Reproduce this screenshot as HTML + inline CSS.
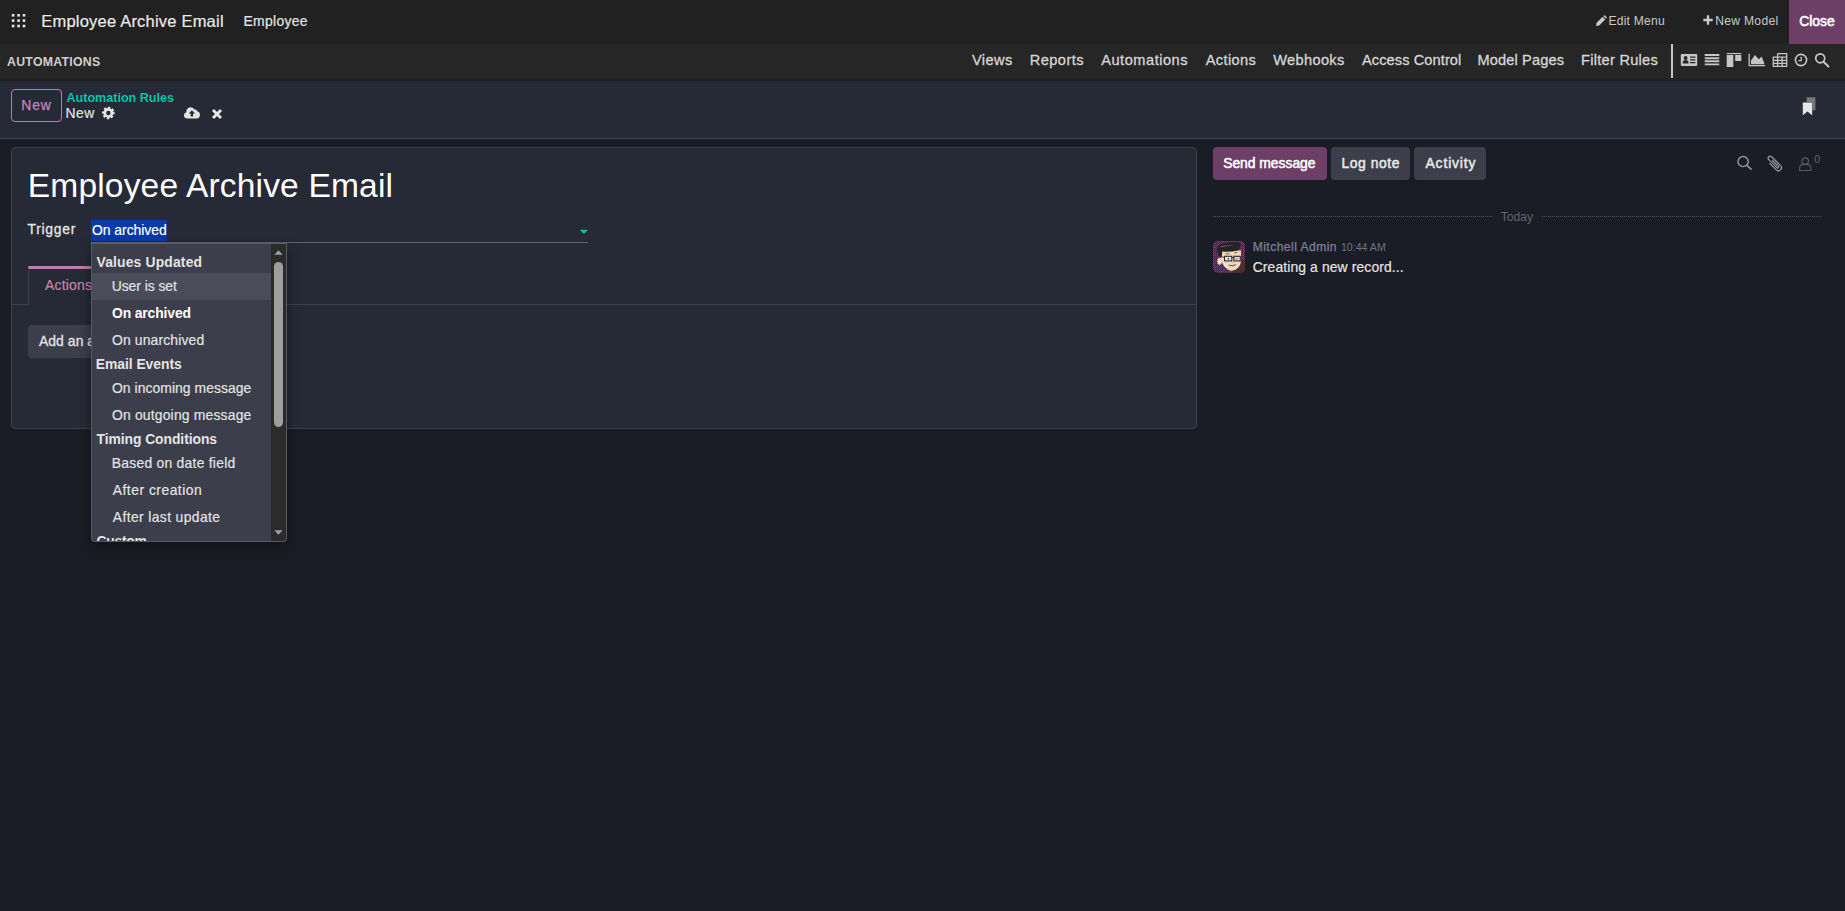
<!DOCTYPE html>
<html lang="en">
<head>
<meta charset="utf-8">
<title>Odoo Studio - Automations</title>
<style>
html,body{margin:0;padding:0;width:1845px;height:911px;overflow:hidden;background:#1b1d26;
  font-family:"Liberation Sans",sans-serif;}
#root{position:relative;width:1845px;height:911px;overflow:hidden;background:#1b1d26;}
.a{position:absolute;box-sizing:border-box;}
.t{position:absolute;white-space:pre;line-height:1;font-family:"Liberation Sans",sans-serif;}
svg{position:absolute;overflow:visible;}
</style>
</head>
<body>
<div id="root">

<!-- ===== top navbar ===== -->
<div class="a" style="left:0;top:0;width:1845px;height:44px;background:#212121;"></div>
<div class="a" style="left:1789px;top:0;width:56px;height:44px;background:#6d3f67;"></div>
<!-- apps grid icon -->
<svg style="left:11px;top:13px" width="16" height="16" viewBox="0 0 16 16" fill="#e6e6e6">
  <rect x="0.8" y="1" width="2.6" height="2.6"/><rect x="6.3" y="1" width="2.6" height="2.6"/><rect x="11.7" y="1" width="2.6" height="2.6"/>
  <rect x="0.8" y="6.3" width="2.6" height="2.6"/><rect x="6.3" y="6.3" width="2.6" height="2.6"/><rect x="11.7" y="6.3" width="2.6" height="2.6"/>
  <rect x="0.8" y="11.7" width="2.6" height="2.6"/><rect x="6.3" y="11.7" width="2.6" height="2.6"/><rect x="11.7" y="11.7" width="2.6" height="2.6"/>
</svg>
<!-- pencil -->
<svg style="left:1595px;top:15px" width="12" height="12" viewBox="0 0 12 12">
  <path d="M1 11 L1.6 7.8 L7.6 1.8 L10.2 4.4 L4.2 10.4 Z" fill="#c9c9c9"/>
  <path d="M8.3 1.1 L9.1 0.4 Q9.6 0 10.1 0.5 L11.5 1.9 Q12 2.4 11.5 2.9 L10.9 3.7 Z" fill="#c9c9c9"/>
</svg>
<!-- plus -->
<svg style="left:1703px;top:15px" width="10" height="10" viewBox="0 0 10 10">
  <path d="M5 0.3 V9.7 M0.3 5 H9.7" stroke="#c9c9c9" stroke-width="2.4" fill="none"/>
</svg>

<!-- ===== studio menu bar ===== -->
<div class="a" style="left:0;top:44px;width:1845px;height:35px;background:#262626;"></div>
<div class="a" style="left:0;top:78px;width:1845px;height:3px;background:#212121;"></div>
<div class="a" style="left:1671px;top:44px;width:2px;height:34px;background:#c6c6c6;"></div>

<!-- view icons -->
<!-- address card -->
<svg style="left:1680px;top:53px" width="18" height="14" viewBox="0 0 18 14">
  <rect x="0.8" y="1" width="16.4" height="12" rx="1.2" fill="#c6c6c6"/>
  <circle cx="5.6" cy="5" r="1.9" fill="#262626"/>
  <path d="M2.6 10.4 Q2.6 7 5.6 7 Q8.6 7 8.6 10.4 Z" fill="#262626"/>
  <path d="M10 4.2 H15.4 M10 6.9 H15.4 M10 9.6 H15.4" stroke="#262626" stroke-width="1.2"/>
</svg>
<!-- list -->
<svg style="left:1704px;top:53px" width="16" height="14" viewBox="0 0 16 14">
  <path d="M0.7 2 H15.3 M0.7 5.2 H15.3 M0.7 8.3 H15.3 M0.7 11.4 H15.3" stroke="#c6c6c6" stroke-width="1.9"/>
</svg>
<!-- kanban -->
<svg style="left:1726px;top:52px" width="16" height="16" viewBox="0 0 16 16" fill="#c6c6c6">
  <rect x="0.7" y="1" width="14.6" height="1.1"/>
  <rect x="0.7" y="3" width="6.6" height="12"/>
  <rect x="9.2" y="3" width="6.1" height="6"/>
</svg>
<!-- area chart -->
<svg style="left:1748px;top:52px" width="18" height="16" viewBox="0 0 18 16">
  <path d="M1.2 1.8 V13.6 H17.2" stroke="#c6c6c6" stroke-width="1.3" fill="none"/>
  <path d="M3 12.2 V8.4 L7 3 L10.8 7.2 L13.6 4.6 L16.2 11 V12.2 Z" fill="#c6c6c6"/>
</svg>
<!-- pivot / table -->
<svg style="left:1772px;top:52px" width="16" height="16" viewBox="0 0 16 16">
  <path d="M5.6 1.6 H14.7 V14.4 H1.3 V5.2 H14.7 M5.6 1.6 V14.4 M10.1 5.2 V14.4 M1.3 8.3 H14.7 M1.3 11.4 H14.7" stroke="#c6c6c6" stroke-width="1.3" fill="none"/>
</svg>
<!-- clock -->
<svg style="left:1794px;top:53px" width="14" height="14" viewBox="0 0 14 14">
  <circle cx="7" cy="7" r="5.6" stroke="#c6c6c6" stroke-width="1.6" fill="none"/>
  <path d="M7.2 3.8 V7.6 H4.4" stroke="#c6c6c6" stroke-width="1.3" fill="none"/>
</svg>
<!-- search -->
<svg style="left:1814px;top:52px" width="16" height="16" viewBox="0 0 16 16">
  <circle cx="6.2" cy="6.3" r="4.5" stroke="#c6c6c6" stroke-width="1.7" fill="none"/>
  <path d="M9.6 9.7 L14.4 14.5" stroke="#c6c6c6" stroke-width="2" stroke-linecap="round"/>
</svg>

<!-- ===== control panel ===== -->
<div class="a" style="left:0;top:81px;width:1845px;height:58px;background:#262a36;border-bottom:1px solid #3f4250;"></div>
<div class="a" style="left:11px;top:89px;width:51px;height:33px;border:1px solid #c27ab2;border-radius:4px;"></div>
<!-- cog -->
<svg style="left:102px;top:107px" width="13" height="13" viewBox="0 0 13 13">
  <g transform="translate(6.35 6.0)">
    <circle r="5.3" fill="none" stroke="#e6e6e6" stroke-width="2" stroke-dasharray="2.35 1.813" transform="rotate(-12)"/>
    <circle r="3.55" fill="none" stroke="#e6e6e6" stroke-width="2.7"/>
  </g>
</svg>
<!-- cloud upload -->
<svg style="left:182.6px;top:105.7px" width="18" height="14" viewBox="0 0 18 14">
  <path d="M4.6 12.4 Q1 12.4 1 9.2 Q1 6.8 3.4 6.2 Q3.2 2.8 6.2 1.6 Q9.4 0.6 11.4 3.6 Q13.6 2.9 14.4 5.6 Q16.9 6 16.9 9 Q16.9 12.4 13.6 12.4 Z" fill="#e4e4e4"/>
  <path d="M8.9 4.2 L12.1 7.6 H10.1 V10.6 H7.7 V7.6 H5.7 Z" fill="#262a36"/>
</svg>
<!-- times -->
<svg style="left:211px;top:107.5px" width="12" height="12" viewBox="0 0 12 12">
  <path d="M2 2 L10 10 M10 2 L2 10" stroke="#e8e8e8" stroke-width="2.9"/>
</svg>
<!-- bookmarks -->
<svg style="left:1801px;top:96px" width="16" height="20" viewBox="0 0 16 20">
  <path d="M5.6 1.2 H14.4 V14.2 H11.4 V6 H5.6 Z" fill="#8f929b" opacity="0.75"/>
  <path d="M1.8 6.4 H11.2 V19.2 L6.5 15.6 L1.8 19.2 Z" fill="#e6e6e6"/>
</svg>

<!-- ===== form sheet ===== -->
<div class="a" style="left:11px;top:147px;width:1186px;height:282px;background:#262a36;border:1px solid #3c3f4c;border-radius:4px;"></div>
<!-- trigger input: selection + underline + caret -->
<div class="a" style="left:91px;top:220px;width:76px;height:21px;background:#0b3aa8;"></div>
<div class="a" style="left:91px;top:242px;width:497px;height:1px;background:#5f6270;"></div>
<svg style="left:579px;top:229px" width="10" height="6" viewBox="0 0 10 6"><path d="M0.8 0.8 H9 L4.9 5 Z" fill="#0fc0a6"/></svg>
<!-- notebook -->
<div class="a" style="left:11px;top:304px;width:1186px;height:1px;background:#3c3f4c;"></div>
<div class="a" style="left:28px;top:266px;width:80px;height:39px;background:#262a36;border-left:1px solid #3c3f4c;border-right:1px solid #3c3f4c;border-top:3px solid #c27dae;"></div>
<div class="a" style="left:28px;top:325px;width:112px;height:33px;background:#3c3e4b;border-radius:4px;"></div>

<!-- ===== chatter ===== -->
<div class="a" style="left:1213px;top:147px;width:114px;height:33px;background:#6d3f67;border-radius:4px;"></div>
<div class="a" style="left:1331px;top:147px;width:79px;height:33px;background:#3c3e4b;border-radius:4px;"></div>
<div class="a" style="left:1414px;top:147px;width:72px;height:33px;background:#3c3e4b;border-radius:4px;"></div>
<div class="a" style="left:1213px;top:216px;width:279px;height:1px;background:repeating-linear-gradient(90deg,#4f5262 0,#4f5262 1px,transparent 1px,transparent 2px);"></div>
<div class="a" style="left:1542px;top:216px;width:279px;height:1px;background:repeating-linear-gradient(90deg,#4f5262 0,#4f5262 1px,transparent 1px,transparent 2px);"></div>
<!-- chatter icons -->
<svg style="left:1736px;top:155px" width="17" height="17" viewBox="0 0 17 17">
  <circle cx="7.1" cy="6.5" r="5.1" stroke="#9197a6" stroke-width="1.45" fill="none"/>
  <path d="M10.9 10.4 L15 14.2" stroke="#9197a6" stroke-width="1.6" stroke-linecap="round"/>
</svg>
<svg style="left:1766px;top:154.6px" width="18" height="18" viewBox="0 0 18 18">
  <g transform="rotate(-45 9 9.4)" fill="none" stroke="#9197a6" stroke-width="1.25" stroke-linecap="round">
    <path d="M6 4.9 V14.2 A3 3 0 0 0 12 14.2 V1.6 A2 2 0 0 0 8 1.6 V13 A1 1 0 0 0 10 13 V4.9"/>
  </g>
</svg>
<svg style="left:1798px;top:156px" width="15" height="16" viewBox="0 0 15 16">
  <circle cx="7.2" cy="5.1" r="3.3" stroke="#555a6c" stroke-width="1.2" fill="none"/>
  <path d="M1.6 14.5 V12.6 Q1.6 8.9 4.7 8.1 Q7.2 9.3 9.7 8.1 Q12.8 8.9 12.8 12.6 V14.5 Z" stroke="#555a6c" stroke-width="1.2" fill="none" stroke-linejoin="round"/>
</svg>
<!-- avatar -->
<svg style="left:1213px;top:241px" width="32" height="32" viewBox="0 0 32 32">
  <defs>
    <clipPath id="av"><rect x="0" y="0" width="32" height="32" rx="5"/></clipPath>
    <pattern id="dz" width="2" height="2" patternUnits="userSpaceOnUse">
      <rect width="2" height="2" fill="#402c44"/><rect width="1" height="1" fill="#82407e"/><rect x="1" y="1" width="1" height="1" fill="#5a3358"/>
    </pattern>
    <pattern id="dz2" width="2" height="2" patternUnits="userSpaceOnUse">
      <rect width="2" height="2" fill="#4a2c2c"/><rect width="1" height="1" fill="#523034"/>
    </pattern>
  </defs>
  <g clip-path="url(#av)">
    <rect width="32" height="32" fill="url(#dz)"/>
    <path d="M19 32 L24.5 22 L32 18 V32 Z" fill="url(#dz2)"/>
    <!-- ear -->
    <ellipse cx="6.6" cy="20.2" rx="2.4" ry="3.5" fill="#ecd3b4"/>
    <ellipse cx="6.9" cy="20.6" rx="1.1" ry="2" fill="#f4ece4"/>
    <!-- face -->
    <path d="M8 9.6 H28 V20 Q27.8 25 23.4 28.2 Q19.4 30.8 15.2 28.8 Q9.8 25.8 8 18 Z" fill="#f1d9b8"/>
    <path d="M11 21 Q12.6 25.6 16 27.4 Q12.8 27.2 10.2 22.6 Z" fill="#f7efe8" opacity="0.8"/>
    <!-- hair -->
    <path d="M4 9 Q4.6 3.4 11 2.2 Q19 0.4 27.4 1.6 Q28.4 6.4 24.6 9.4 Q17 11.2 9.2 10.4 L8.8 16.6 Q6 15.8 4.8 12.8 Z" fill="#242427"/>
    <path d="M7.4 5.6 Q13 3.6 20.6 4.6 Q14 5 7.8 6.6 Z" fill="#5d5a66"/>
    <!-- glasses -->
    <rect x="11.6" y="15.3" width="7.2" height="4.6" fill="#f4f0ea" stroke="#262834" stroke-width="1.1"/>
    <rect x="20.9" y="15.3" width="6.4" height="4.6" fill="#e6d6c2" stroke="#262834" stroke-width="1.1"/>
    <path d="M18.8 16.6 H20.9 M8.6 15.8 L11.6 16.4" stroke="#262834" stroke-width="0.9"/>
    <circle cx="15.4" cy="17.7" r="0.9" fill="#2c3450"/>
    <circle cx="23.8" cy="17.7" r="0.8" fill="#8b7764"/>
    <!-- brows -->
    <path d="M12.8 12.8 H16.4 M21.6 11.6 H24" stroke="#3a3436" stroke-width="0.8"/>
    <!-- nose & mouth -->
    <path d="M19.6 21.6 H21.6" stroke="#d9b795" stroke-width="0.7"/>
    <path d="M15.8 24 Q19.4 25.4 22.8 23.6 Q19.4 26.4 15.8 24 Z" fill="#6c4a4a" stroke="#5a4148" stroke-width="0.5"/>
  </g>
</svg>

<span class="t" style="left:41.24px;top:13.03px;font-size:16.5px;font-weight:400;color:#ececec;letter-spacing:0.210px;-webkit-text-stroke:0.18px #ececec;">Employee Archive Email</span>
<span class="t" style="left:243.50px;top:15.23px;font-size:13.9px;font-weight:400;color:#e6e6e6;letter-spacing:0.322px;-webkit-text-stroke:0.18px #e6e6e6;">Employee</span>
<span class="t" style="left:1608.42px;top:14.76px;font-size:12.1px;font-weight:400;color:#c9c9c9;letter-spacing:0.229px;">Edit Menu</span>
<span class="t" style="left:1715.18px;top:14.76px;font-size:12.1px;font-weight:400;color:#c9c9c9;letter-spacing:0.312px;">New Model</span>
<span class="t" style="left:1799.22px;top:15.23px;font-size:13.9px;font-weight:400;color:#ffffff;letter-spacing:0.008px;-webkit-text-stroke:0.55px #fff;">Close</span>
<span class="t" style="left:7.00px;top:55.59px;font-size:12.3px;font-weight:700;color:#cfcfcf;letter-spacing:0.280px;">AUTOMATIONS</span>
<span class="t" style="left:972.00px;top:52.64px;font-size:14.6px;font-weight:400;color:#d6d6d6;letter-spacing:0.403px;-webkit-text-stroke:0.3px #d6d6d6;">Views</span>
<span class="t" style="left:1029.76px;top:52.64px;font-size:14.6px;font-weight:400;color:#d6d6d6;letter-spacing:0.446px;-webkit-text-stroke:0.3px #d6d6d6;">Reports</span>
<span class="t" style="left:1101.24px;top:52.64px;font-size:14.6px;font-weight:400;color:#d6d6d6;letter-spacing:0.518px;-webkit-text-stroke:0.3px #d6d6d6;">Automations</span>
<span class="t" style="left:1205.76px;top:52.64px;font-size:14.6px;font-weight:400;color:#d6d6d6;letter-spacing:0.363px;-webkit-text-stroke:0.3px #d6d6d6;">Actions</span>
<span class="t" style="left:1273.22px;top:52.64px;font-size:14.6px;font-weight:400;color:#d6d6d6;letter-spacing:0.342px;-webkit-text-stroke:0.3px #d6d6d6;">Webhooks</span>
<span class="t" style="left:1362.00px;top:52.64px;font-size:14.6px;font-weight:400;color:#d6d6d6;letter-spacing:0.088px;-webkit-text-stroke:0.3px #d6d6d6;">Access Control</span>
<span class="t" style="left:1477.48px;top:52.64px;font-size:14.6px;font-weight:400;color:#d6d6d6;letter-spacing:0.137px;-webkit-text-stroke:0.3px #d6d6d6;">Model Pages</span>
<span class="t" style="left:1581.00px;top:52.64px;font-size:14.6px;font-weight:400;color:#d6d6d6;letter-spacing:0.273px;-webkit-text-stroke:0.3px #d6d6d6;">Filter Rules</span>
<span class="t" style="left:21.24px;top:99.23px;font-size:13.9px;font-weight:400;color:#c985b8;letter-spacing:0.892px;-webkit-text-stroke:0.25px #c985b8;">New</span>
<span class="t" style="left:66.50px;top:92.33px;font-size:12.6px;font-weight:700;color:#02c2a8;letter-spacing:-0.016px;">Automation Rules</span>
<span class="t" style="left:65.48px;top:107.23px;font-size:13.9px;font-weight:400;color:#e4e4e4;letter-spacing:0.522px;-webkit-text-stroke:0.18px #e4e4e4;">New</span>
<span class="t" style="left:27.72px;top:168.56px;font-size:33.6px;font-weight:400;color:#ffffff;letter-spacing:0.154px;">Employee Archive Email</span>
<span class="t" style="left:27.48px;top:223.23px;font-size:13.9px;font-weight:400;color:#e4e4e4;letter-spacing:0.741px;-webkit-text-stroke:0.3px #e4e4e4;">Trigger</span>
<span class="t" style="left:91.98px;top:224.23px;font-size:13.9px;font-weight:400;color:#ffffff;letter-spacing:-0.015px;-webkit-text-stroke:0.18px #ffffff;">On archived</span>
<span class="t" style="left:45.00px;top:279.23px;font-size:13.9px;font-weight:400;color:#c985b8;letter-spacing:0.232px;-webkit-text-stroke:0.18px #c985b8;">Actions</span>
<span class="t" style="left:39.00px;top:335.23px;font-size:13.9px;font-weight:400;color:#e4e4e4;letter-spacing:0.065px;-webkit-text-stroke:0.3px #e4e4e4;">Add an action</span>
<span class="t" style="left:1223.18px;top:157.23px;font-size:13.9px;font-weight:400;color:#ffffff;letter-spacing:-0.031px;-webkit-text-stroke:0.5px #fff;">Send message</span>
<span class="t" style="left:1341.52px;top:157.23px;font-size:13.9px;font-weight:400;color:#e8e8e8;letter-spacing:0.562px;-webkit-text-stroke:0.5px #e8e8e8;">Log note</span>
<span class="t" style="left:1425.50px;top:157.23px;font-size:13.9px;font-weight:400;color:#e8e8e8;letter-spacing:0.853px;-webkit-text-stroke:0.5px #e8e8e8;">Activity</span>
<span class="t" style="left:1500.76px;top:210.76px;font-size:12.1px;font-weight:400;color:#5f6273;letter-spacing:0.019px;">Today</span>
<span class="t" style="left:1252.70px;top:240.76px;font-size:12.1px;font-weight:400;color:#7c8296;letter-spacing:0.453px;-webkit-text-stroke:0.25px #7c8296;">Mitchell Admin</span>
<span class="t" style="left:1340.94px;top:242.03px;font-size:10.6px;font-weight:400;color:#6f7382;letter-spacing:0.009px;">10:44 AM</span>
<span class="t" style="left:1252.70px;top:261.23px;font-size:13.9px;font-weight:400;color:#e4e4e4;letter-spacing:0.117px;-webkit-text-stroke:0.18px #e4e4e4;">Creating a new record...</span>
<span class="t" style="left:1814.24px;top:154.03px;font-size:10.6px;font-weight:400;color:#5f6376;letter-spacing:0.000px;">0</span>

<!-- ===== dropdown ===== -->
<div class="a" style="left:91px;top:243px;width:196px;height:299px;background:#3c3e4b;border:1px solid #565968;border-top:1px solid #5d6070;border-radius:0 0 4px 4px;box-shadow:0 4px 13px rgba(0,0,0,0.42);overflow:hidden;">
  <div class="a" style="left:0;top:29px;width:180px;height:27px;background:#4b4c5a;"></div>
  <!-- scrollbar -->
  <div class="a" style="left:179px;top:0;width:15px;height:299px;background:#2b2b2b;"></div>
  <svg style="left:182px;top:6px" width="9" height="5" viewBox="0 0 9 5"><path d="M0.3 4.8 L4.5 0.2 L8.7 4.8 Z" fill="#a0a0a0"/></svg>
  <svg style="left:182px;top:286px" width="9" height="5" viewBox="0 0 9 5"><path d="M0.3 0.2 L4.5 4.8 L8.7 0.2 Z" fill="#a0a0a0"/></svg>
  <div class="a" style="left:182px;top:18px;width:9px;height:165px;background:#9e9e9e;border-radius:4.5px;"></div>
  <span class="t" style="left:4.50px;top:12.23px;font-size:13.9px;font-weight:700;color:#e4e4e4;letter-spacing:0.159px;">Values Updated</span>
<span class="t" style="left:19.76px;top:36.23px;font-size:13.9px;font-weight:400;color:#e4e4e4;letter-spacing:-0.051px;-webkit-text-stroke:0.18px #e4e4e4;">User is set</span>
<span class="t" style="left:19.96px;top:63.23px;font-size:13.9px;font-weight:700;color:#ffffff;letter-spacing:-0.128px;">On archived</span>
<span class="t" style="left:19.96px;top:90.23px;font-size:13.9px;font-weight:400;color:#e4e4e4;letter-spacing:0.160px;-webkit-text-stroke:0.18px #e4e4e4;">On unarchived</span>
<span class="t" style="left:3.70px;top:114.23px;font-size:13.9px;font-weight:700;color:#e4e4e4;letter-spacing:-0.037px;">Email Events</span>
<span class="t" style="left:19.96px;top:138.23px;font-size:13.9px;font-weight:400;color:#e4e4e4;letter-spacing:0.062px;-webkit-text-stroke:0.18px #e4e4e4;">On incoming message</span>
<span class="t" style="left:19.96px;top:165.23px;font-size:13.9px;font-weight:400;color:#e4e4e4;letter-spacing:0.190px;-webkit-text-stroke:0.18px #e4e4e4;">On outgoing message</span>
<span class="t" style="left:4.50px;top:189.23px;font-size:13.9px;font-weight:700;color:#e4e4e4;letter-spacing:-0.071px;">Timing Conditions</span>
<span class="t" style="left:19.76px;top:213.23px;font-size:13.9px;font-weight:400;color:#e4e4e4;letter-spacing:0.253px;-webkit-text-stroke:0.18px #e4e4e4;">Based on date field</span>
<span class="t" style="left:20.76px;top:240.23px;font-size:13.9px;font-weight:400;color:#e4e4e4;letter-spacing:0.489px;-webkit-text-stroke:0.18px #e4e4e4;">After creation</span>
<span class="t" style="left:20.76px;top:267.23px;font-size:13.9px;font-weight:400;color:#e4e4e4;letter-spacing:0.381px;-webkit-text-stroke:0.18px #e4e4e4;">After last update</span>
<span class="t" style="left:4.50px;top:291.23px;font-size:13.9px;font-weight:700;color:#e4e4e4;letter-spacing:-0.270px;">Custom</span>
</div>

</div>
</body>
</html>
